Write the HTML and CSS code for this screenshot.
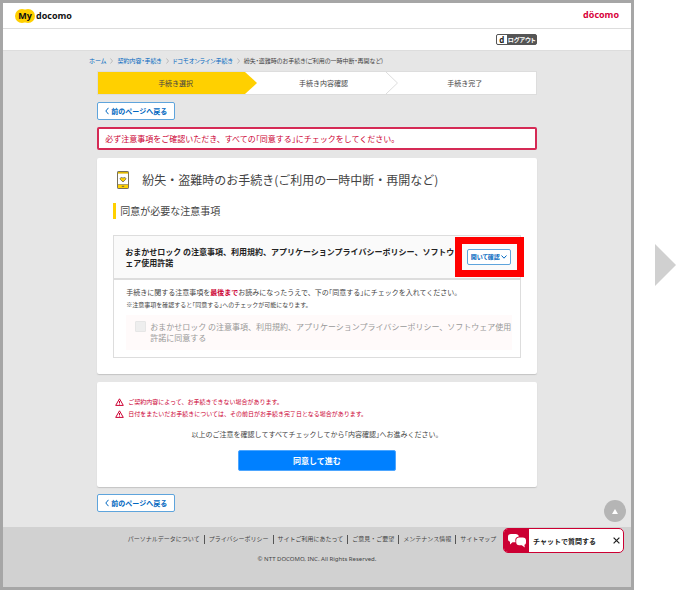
FILE: index.html
```html
<!DOCTYPE html>
<html lang="ja">
<head>
<meta charset="utf-8">
<meta name="viewport" content="width=device-width, initial-scale=1">
<title>My docomo</title>
<link rel="stylesheet" href="styles.css">
</head>
<body>
<div class="frame">
  <header class="header">
    <a class="my-logo" href="#"><span class="my-mark"><svg viewBox="0 0 20 14" width="20" height="14" aria-hidden="true"><circle cx="7" cy="7" r="7" fill="#ffd000"/><circle cx="13" cy="7" r="7" fill="#ffd000"/></svg><span class="my-text">My</span></span><span class="my-name">docomo</span></a>
    <a class="brand" href="#">döcomo</a>
  </header>
  <div class="subheader">
    <div class="wrap subheader-row">
      <button class="logout" type="button"><span class="logout-d">d</span><span class="logout-text">ログアウト</span></button>
    </div>
  </div>

  <main class="main">
    <div class="wrap">
      <nav class="crumbs">
        <a href="#">ホーム</a>
        <svg viewBox="0 0 3 6" width="3" height="6" aria-hidden="true"><path d="M.5 .5 2.5 3 .5 5.5"/></svg>
        <a href="#">契約内容・手続き</a>
        <svg viewBox="0 0 3 6" width="3" height="6" aria-hidden="true"><path d="M.5 .5 2.5 3 .5 5.5"/></svg>
        <a href="#">ドコモオンライン手続き</a>
        <svg viewBox="0 0 3 6" width="3" height="6" aria-hidden="true"><path d="M.5 .5 2.5 3 .5 5.5"/></svg>
        <span>紛失・盗難時のお手続き(ご利用の一時中断・再開など)</span>
      </nav>

      <ol class="steps">
        <li class="step step-active">手続き選択<svg class="step-arrow" viewBox="0 0 12 22" preserveAspectRatio="none" aria-hidden="true"><path d="M0 0 12 11 0 22Z" fill="#ffd000"/></svg></li>
        <li class="step step-next">手続き内容確認<svg class="step-arrow" viewBox="0 0 12 22" preserveAspectRatio="none" aria-hidden="true"><path d="M0 0 11.5 11 0 22" fill="none" stroke="#ddd"/></svg></li>
        <li class="step step-last">手続き完了</li>
      </ol>

      <button class="back" type="button"><svg viewBox="0 0 4 8" width="4" height="8" aria-hidden="true"><path d="M3.5 .8 .8 4 3.5 7.2"/></svg>前のページへ戻る</button>

      <p class="alert">必ず注意事項をご確認いただき、すべての｢同意する｣にチェックをしてください。</p>

      <section class="card card-main">
        <h1 class="title">
          <svg viewBox="0 0 12 18" width="12" height="18" aria-hidden="true"><rect x=".5" y=".5" width="11" height="17" rx=".6" fill="#fff" stroke="#77705a"/><path d="M1 1h10v1.600H1z" fill="#e0b800"/><path d="M1 13.500h10V17H1z" fill="#ffd000"/><path d="M1 13.500h10" stroke="#77705a" stroke-width=".6"/><path d="M4.800 15.300h2.400" stroke="#555" stroke-width=".9"/><path d="M6 11 3.300 8.400C2.400 7 4.600 5.600 6 7.200 7.400 5.600 9.600 7 8.700 8.400Z" fill="#ffd000" stroke="#555" stroke-width=".7"/></svg>
          紛失・盗難時のお手続き(ご利用の一時中断・再開など)
        </h1>
        <h2 class="section-title">同意が必要な注意事項</h2>

        <div class="terms">
          <div class="terms-head">
            <h3>おまかせロック の注意事項、利用規約、アプリケーションプライバシーポリシー、ソフトウェア使用許諾</h3>
            <div class="open-wrap">
              <button class="open" type="button">開いて確認<svg viewBox="0 0 6 4" width="6" height="4" aria-hidden="true"><path d="M.5 .5 3 3.2 5.5 .5"/></svg></button>
            </div>
          </div>
          <div class="terms-body">
            <p class="lead">手続きに関する注意事項を<strong>最後まで</strong>お読みになったうえで、下の｢同意する｣にチェックを入れてください。</p>
            <p class="note">※注意事項を確認すると｢同意する｣へのチェックが可能になります。</p>
            <div class="agree">
              <input type="checkbox" id="agree" disabled>
              <label for="agree">おまかせロック の注意事項、利用規約、アプリケーションプライバシーポリシー、ソフトウェア使用許諾に同意する</label>
            </div>
          </div>
        </div>
      </section>

      <section class="card card-submit">
        <ul class="warnings">
          <li><svg viewBox="0 0 9 8" width="9" height="8" aria-hidden="true"><path d="M4.5 .8 8.3 7.4H.7Z"/><path d="M4.5 3v2M4.5 5.6v.9"/></svg>ご契約内容によって、お手続きできない場合があります。</li>
          <li><svg viewBox="0 0 9 8" width="9" height="8" aria-hidden="true"><path d="M4.5 .8 8.3 7.4H.7Z"/><path d="M4.5 3v2M4.5 5.6v.9"/></svg>日付をまたいだお手続きについては、その前日がお手続き完了日となる場合があります。</li>
        </ul>
        <p class="guide">以上のご注意を確認してすべてチェックしてから｢内容確認｣へお進みください。</p>
        <button class="submit" type="button">同意して進む</button>
      </section>

      <button class="back" type="button"><svg viewBox="0 0 4 8" width="4" height="8" aria-hidden="true"><path d="M3.5 .8 .8 4 3.5 7.2"/></svg>前のページへ戻る</button>
    </div>
    <button class="to-top" type="button" aria-label="ページの先頭へ"><svg viewBox="0 0 6 5" width="6" height="5" aria-hidden="true"><path d="M3 0 6 5H0Z" fill="#fff"/></svg></button>
  </main>

  <footer class="footer">
    <ul class="links">
      <li><a href="#">パーソナルデータについて</a></li>
      <li><a href="#">プライバシーポリシー</a></li>
      <li><a href="#">サイトご利用にあたって</a></li>
      <li><a href="#">ご意見・ご要望</a></li>
      <li><a href="#">メンテナンス情報</a></li>
      <li><a href="#">サイトマップ</a></li>
    </ul>
    <p class="copyright">© NTT DOCOMO, INC. All Rights Reserved.</p>
    <div class="chat">
      <span class="chat-icon"><svg viewBox="0 0 18 14" width="18" height="14" aria-hidden="true"><path d="M3 0H7.500C9.500 0 10.800 1 10.800 2.600C8.400 2.900 7.300 4.200 7.300 6.200c0 .8.1 1.500.4 2H4.500L2 10.400V7.800C.6 7.200 0 6.400 0 5V3C0 1 1.200 0 3 0Z" fill="#fff"/><path d="M11.200 3.600h3.600c2 0 3.200 1.100 3.200 2.900v1.700c0 1.400-.6 2.200-1.600 2.600L16.800 13.600l-3-2.400h-2.600c-1.900 0-3-1.100-3-2.900V6.500c0-1.800 1.100-2.900 3-2.900Z" fill="#fff"/></svg></span>
      <button class="chat-text" type="button">チャットで質問する</button>
      <button class="chat-close" type="button" aria-label="閉じる"><svg viewBox="0 0 7 7" width="7" height="7" aria-hidden="true"><path d="M.6 .6 6.400 6.400M6.400 .6 .6 6.400" stroke="#222" stroke-width="1.200"/></svg></button>
    </div>
  </footer>
</div>
<div class="next" aria-hidden="true"><svg viewBox="0 0 21 42" width="21" height="42"><path d="M0 0 21 21 0 42Z" fill="#d0d0d0"/></svg></div>
</body>
</html>
```
FILE: styles.css
```css
* {
  box-sizing: border-box;
}

body {
  margin: 0;
  min-height: 100vh;
  display: flex;
  background: #fff;
  color: #444;
  font-family: "Noto Sans CJK JP", sans-serif;
  font-size: 7px;
  line-height: 12px;
}

h1, h2, h3, p, ul, ol {
  margin: 0;
  padding: 0;
  font-weight: 400;
}

ul, ol {
  list-style: none;
}

a {
  color: inherit;
  text-decoration: none;
}

button {
  font: inherit;
  color: inherit;
  padding: 0;
  border: 0;
  background: none;
}

svg {
  flex: none;
}

.frame {
  flex: 1;
  display: flex;
  flex-direction: column;
  border: 3px solid #a6a6a6;
}

.wrap {
  width: 70%;
  margin: 0 auto;
}

/* Header */
.header {
  display: flex;
  justify-content: space-between;
  align-items: center;
  height: 26px;
  padding: 0 12px;
  border-bottom: 1px solid #ddd;
}

.my-logo {
  display: flex;
  align-items: center;
  gap: 1px;
  color: #111;
  font-family: "Open Sans", "Noto Sans", sans-serif;
  font-size: 9px;
  font-weight: 700;
}

.my-mark {
  display: grid;
  place-items: center;
}

.my-mark > * {
  grid-area: 1 / 1;
}

.brand {
  padding-bottom: 2px;
  color: #d7003a;
  font-family: "Open Sans", "Noto Sans", sans-serif;
  font-size: 9px;
  font-weight: 700;
}

.subheader {
  padding: 5px 0;
  border-bottom: 1px solid #ddd;
}

.subheader-row {
  display: flex;
  justify-content: flex-end;
}

.logout {
  display: flex;
  align-items: center;
  height: 11px;
  border: 1px solid #555;
  border-radius: 2px;
  background: #555;
  overflow: hidden;
}

.logout-d {
  width: 10px;
  background: #fff;
  color: #222;
  font-family: "Open Sans", sans-serif;
  font-size: 8px;
  font-weight: 700;
}

.logout-text {
  padding-left: 1px;
  color: #fff;
  font-size: 6px;
  font-weight: 700;
  font-feature-settings: "palt";
}

/* Main */
.main {
  position: relative;
  flex: 1;
  padding: 4px 0 14px;
  background: #e6e6e6;
}

.crumbs {
  display: flex;
  align-items: center;
  gap: 4px;
  margin: 0 0 4px -8px;
  font-size: 6px;
  font-feature-settings: "palt";
  white-space: nowrap;
}

.crumbs a {
  color: #0067c0;
}

.crumbs svg {
  fill: none;
  stroke: #bbb;
  stroke-width: 1;
}

.steps {
  display: grid;
  grid-template-columns: 147fr 141fr 150fr;
  height: 24px;
  margin-bottom: 7px;
  border: 1px solid #ddd;
  background: #fff;
}

.step {
  position: relative;
  display: flex;
  align-items: center;
  justify-content: center;
}

.step-active {
  padding-left: 8px;
  background: #ffd000;
}

.step-next {
  padding-left: 16px;
}

.step-last {
  padding-left: 8px;
}

.step-arrow {
  position: absolute;
  top: 0;
  left: 100%;
  width: 12px;
  height: 100%;
}

.back {
  display: flex;
  align-items: center;
  justify-content: center;
  gap: 2px;
  width: 78px;
  height: 18px;
  border: 1px solid #5ea4dc;
  border-radius: 2px;
  background: #fff;
  color: #0067c0;
  font-weight: 700;
}

.back svg,
.open svg {
  fill: none;
  stroke: #0067c0;
  stroke-width: 1;
}

.alert {
  margin: 7px 0 8px;
  padding: 4px 6px;
  border: 2px solid #d52a55;
  border-radius: 2px;
  background: #fff;
  color: #cc0033;
  font-size: 8px;
  line-height: 11px;
}

.card {
  padding: 0 16px;
  border-radius: 2px;
  background: #fff;
  box-shadow: 0 1px 1px #c4c4c4;
}

.card-main {
  padding-top: 12px;
  padding-bottom: 16px;
  margin-bottom: 8px;
}

.title {
  display: flex;
  align-items: center;
  gap: 13px;
  padding-left: 4px;
  font-size: 12px;
  line-height: 20px;
}

.section-title {
  margin: 13px 0 16px;
  padding-left: 4px;
  border-left: 3px solid #ffd000;
  font-size: 10px;
  line-height: 16px;
}

.terms {
  border: 1px solid #ddd;
}

.terms-head {
  display: flex;
  justify-content: space-between;
  align-items: center;
  padding: 10px 9px 10px 11px;
  border-bottom: 2px solid #ddd;
  background: #fafafa;
}

.terms-head h3 {
  flex: 1;
  padding-right: 10px;
  color: #222;
  font-size: 8px;
  font-weight: 700;
  line-height: 11px;
}

.open-wrap {
  position: relative;
}

/* Highlight drawn round the button */
.open-wrap::after {
  content: "";
  position: absolute;
  inset: -12px -13px -12px -12px;
  border: 7px solid #f00;
  pointer-events: none;
}

.open {
  display: flex;
  align-items: center;
  justify-content: center;
  gap: 1px;
  width: 44px;
  height: 16px;
  border: 1px solid #5ea4dc;
  border-radius: 2px;
  background: #fff;
  color: #0067c0;
  font-size: 6px;
  font-weight: 700;
  font-feature-settings: "palt";
}

.terms-body {
  padding: 6px 8px 7px 12px;
}

.lead strong {
  color: #cc0033;
  font-weight: 700;
}

.note {
  margin: 1px 0 4px;
  font-size: 6px;
}

.agree {
  display: flex;
  gap: 4px;
  padding: 6px 0 7px 9px;
  background: #fffafa;
  color: #999;
  font-size: 8px;
  line-height: 11px;
}

.agree input {
  appearance: none;
  flex: none;
  width: 11px;
  height: 11px;
  margin: 0;
  border: 1px solid #e6e6e6;
  border-radius: 1px;
  background: #eee;
}

.card-submit {
  padding-top: 14px;
  padding-bottom: 16px;
  margin-bottom: 7px;
}

.warnings {
  padding-left: 2px;
  color: #cc0033;
  font-size: 6px;
}

.warnings li {
  display: flex;
  align-items: center;
  gap: 4px;
}

.warnings svg {
  fill: none;
  stroke: #cc0033;
  stroke-width: 1;
}

.guide {
  margin: 8px 0 10px;
  text-align: center;
}

.submit {
  display: block;
  width: 158px;
  height: 21px;
  margin: 0 auto;
  border: 1px solid #4da6ff;
  border-radius: 2px;
  background: #0080ff;
  color: #fff;
  font-size: 8px;
  font-weight: 700;
}

.to-top {
  position: absolute;
  right: 5px;
  bottom: 5px;
  display: grid;
  place-items: center;
  width: 22px;
  height: 22px;
  border-radius: 50%;
  background: #b5b5b5;
}

/* Footer */
.footer {
  position: relative;
  padding: 6px 0 22px;
  background: #d1d1d1;
  font-size: 6px;
}

.links {
  display: flex;
  justify-content: center;
  padding-right: 10px;
}

.links li {
  display: flex;
  align-items: center;
}

.links li + li::before {
  content: "";
  width: 1px;
  height: 9px;
  margin: 0 4px;
  background: #555;
}

.copyright {
  margin-top: 8px;
  text-align: center;
  font-family: "Noto Sans", sans-serif;
}

.chat {
  position: absolute;
  top: 1px;
  right: 7px;
  display: flex;
  align-items: center;
  width: 121px;
  height: 25px;
  border: 1px solid #cc0033;
  border-radius: 5px;
  background: #fff;
  overflow: hidden;
}

.chat-icon {
  display: grid;
  place-items: center;
  align-self: stretch;
  width: 25px;
  background: #cc0033;
}

.chat-text {
  flex: 1;
  padding-left: 4px;
  color: #222;
  font-size: 7px;
  font-weight: 700;
  text-align: left;
}

.chat-close {
  display: grid;
  place-items: center;
  width: 14px;
  height: 14px;
}

/* Arrow beside the frame */
.next {
  display: flex;
  flex: none;
  justify-content: flex-end;
  width: 42px;
  padding-top: 244px;
}
```
